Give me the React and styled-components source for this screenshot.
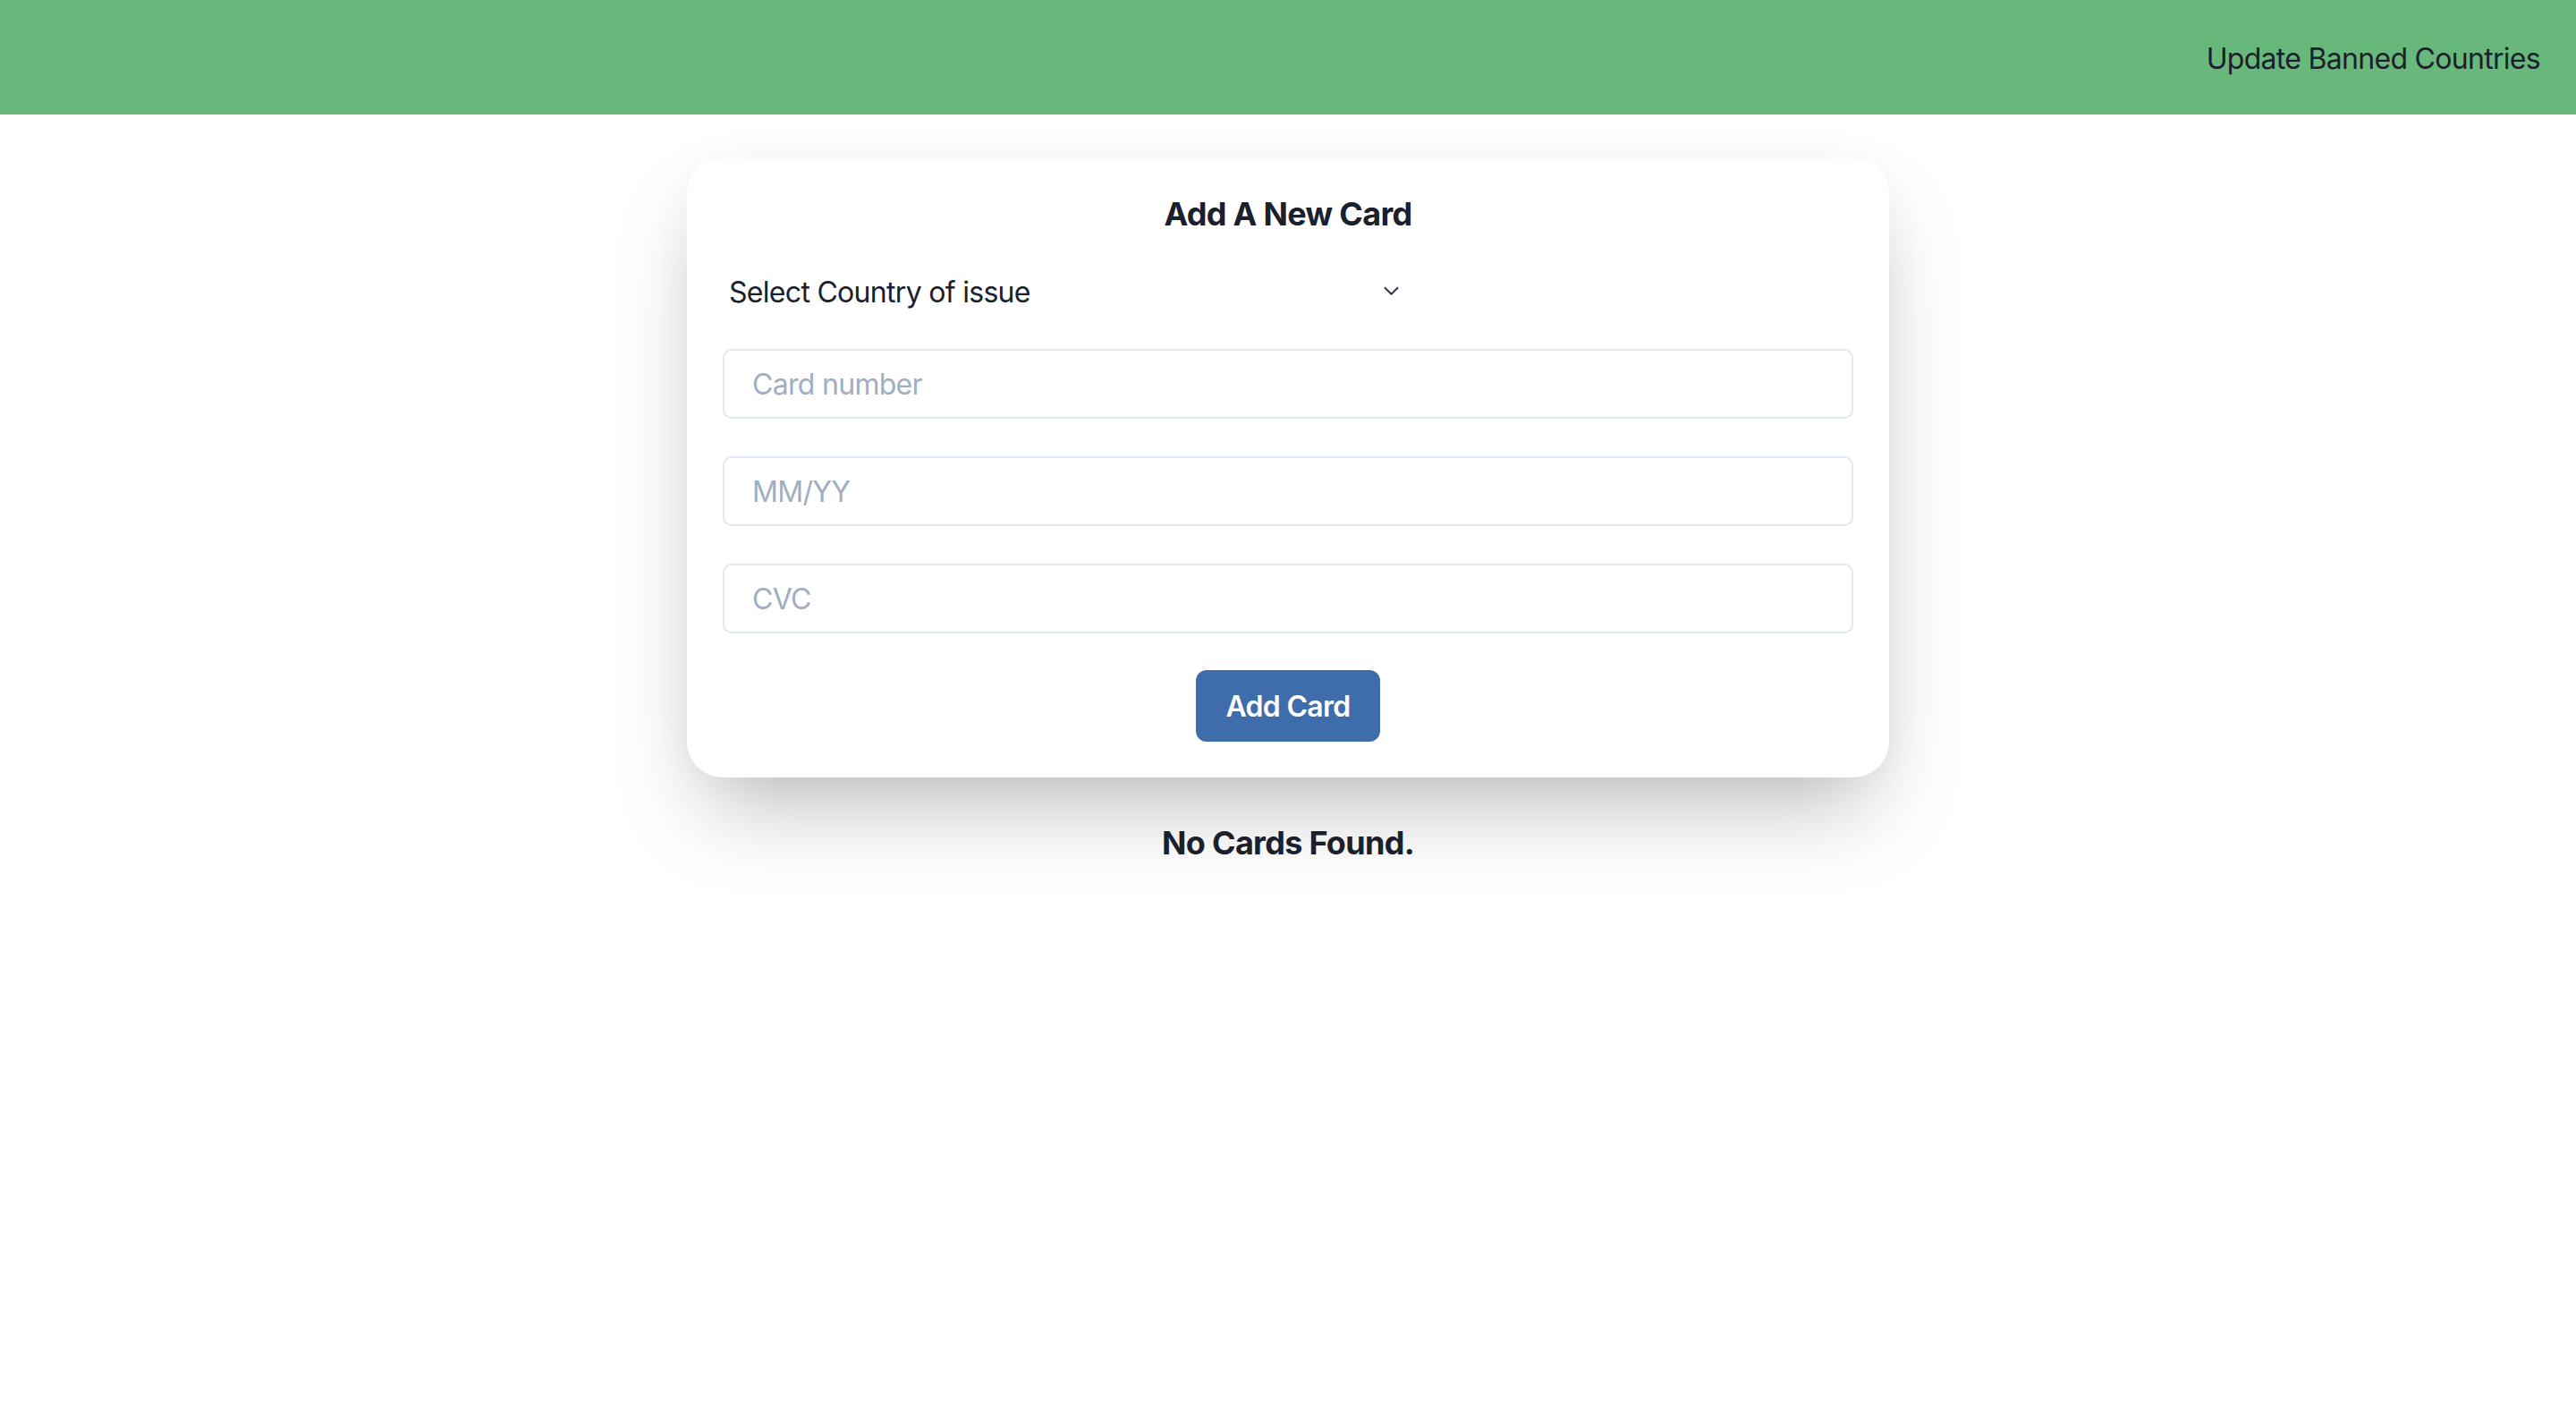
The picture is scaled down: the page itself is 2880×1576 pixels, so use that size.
import styled, { createGlobalStyle } from "styled-components";

const GlobalStyle = createGlobalStyle`
  html, body {
    margin: 0;
    padding: 0;
    background: #ffffff;
    font-family: Inter, "Noto Sans", "Liberation Sans", sans-serif;
    letter-spacing: -0.7px;
    color: #1a202c;
  }
  * {
    box-sizing: border-box;
  }
  input, select, button {
    letter-spacing: inherit;
  }
`;

export default function App() {
  return (
    <>
      <GlobalStyle />
      <Header>
        <NavLink href="#">Update Banned Countries</NavLink>
      </Header>
      <Main>
        <Card>
          <Title>Add A New Card</Title>
          <SelectWrapper>
            <CountrySelect defaultValue="">
              <option value="">Select Country of issue</option>
            </CountrySelect>
            <Chevron viewBox="0 0 18 10" fill="none">
              <path d="M1 1l8 8 8-8" stroke="#2d3748" strokeWidth="2" />
            </Chevron>
          </SelectWrapper>
          <Fields>
            <Field placeholder="Card number" />
            <Field placeholder="MM/YY" />
            <Field placeholder="CVC" />
          </Fields>
          <AddButton type="button">Add Card</AddButton>
        </Card>
        <EmptyText>No Cards Found.</EmptyText>
      </Main>
    </>
  );
}

const Header = styled.header`
  height: 128px;
  background: #68b87c;
  display: flex;
  align-items: center;
  justify-content: flex-end;
  padding: 3px 40px 0;
`;

const NavLink = styled.a`
  font-size: 32px;
  line-height: 48px;
  color: #1a202c;
  text-decoration: none;
`;

const Main = styled.main`
  display: flex;
  flex-direction: column;
  align-items: center;
  padding: 49px 0 80px;
`;

const Card = styled.div`
  width: 1344px;
  background: #ffffff;
  border-radius: 40px;
  padding: 40px;
  display: flex;
  flex-direction: column;
  align-items: center;
  box-shadow: 0 50px 100px -22px rgba(0, 0, 0, 0.27),
    0 0 50px rgba(0, 0, 0, 0.03);
`;

const Title = styled.h2`
  margin: 0;
  font-size: 36px;
  line-height: 44px;
  font-weight: 700;
  color: #1a202c;
`;

const SelectWrapper = styled.div`
  position: relative;
  align-self: flex-start;
  width: 764px;
  margin-top: 42px;
`;

const CountrySelect = styled.select`
  appearance: none;
  -webkit-appearance: none;
  width: 100%;
  height: 48px;
  border: none;
  background: transparent;
  padding: 0 0 0 7px;
  font-family: inherit;
  font-size: 32px;
  line-height: 48px;
  color: #1a202c;
  outline: none;
`;

const Chevron = styled.svg`
  position: absolute;
  right: 8px;
  top: 17px;
  width: 17px;
  height: 10px;
  pointer-events: none;
`;

const Fields = styled.div`
  width: 100%;
  display: flex;
  flex-direction: column;
  gap: 42px;
  margin-top: 39px;
`;

const Field = styled.input`
  width: 100%;
  height: 78px;
  border: 2px solid #e2e8f0;
  border-radius: 10px;
  padding: 0 31px;
  font-family: inherit;
  font-size: 32px;
  color: #1a202c;
  background: #ffffff;
  outline: none;

  &::placeholder {
    color: #a0aec0;
  }
`;

const AddButton = styled.button`
  margin-top: 41px;
  width: 206px;
  height: 80px;
  border: none;
  border-radius: 12px;
  background: #3f6cab;
  color: #ffffff;
  font-family: inherit;
  font-size: 32px;
  font-weight: 600;
  cursor: pointer;
`;

const EmptyText = styled.p`
  margin: 51px 0 0;
  font-size: 36px;
  line-height: 44px;
  font-weight: 700;
  color: #1a202c;
`;
